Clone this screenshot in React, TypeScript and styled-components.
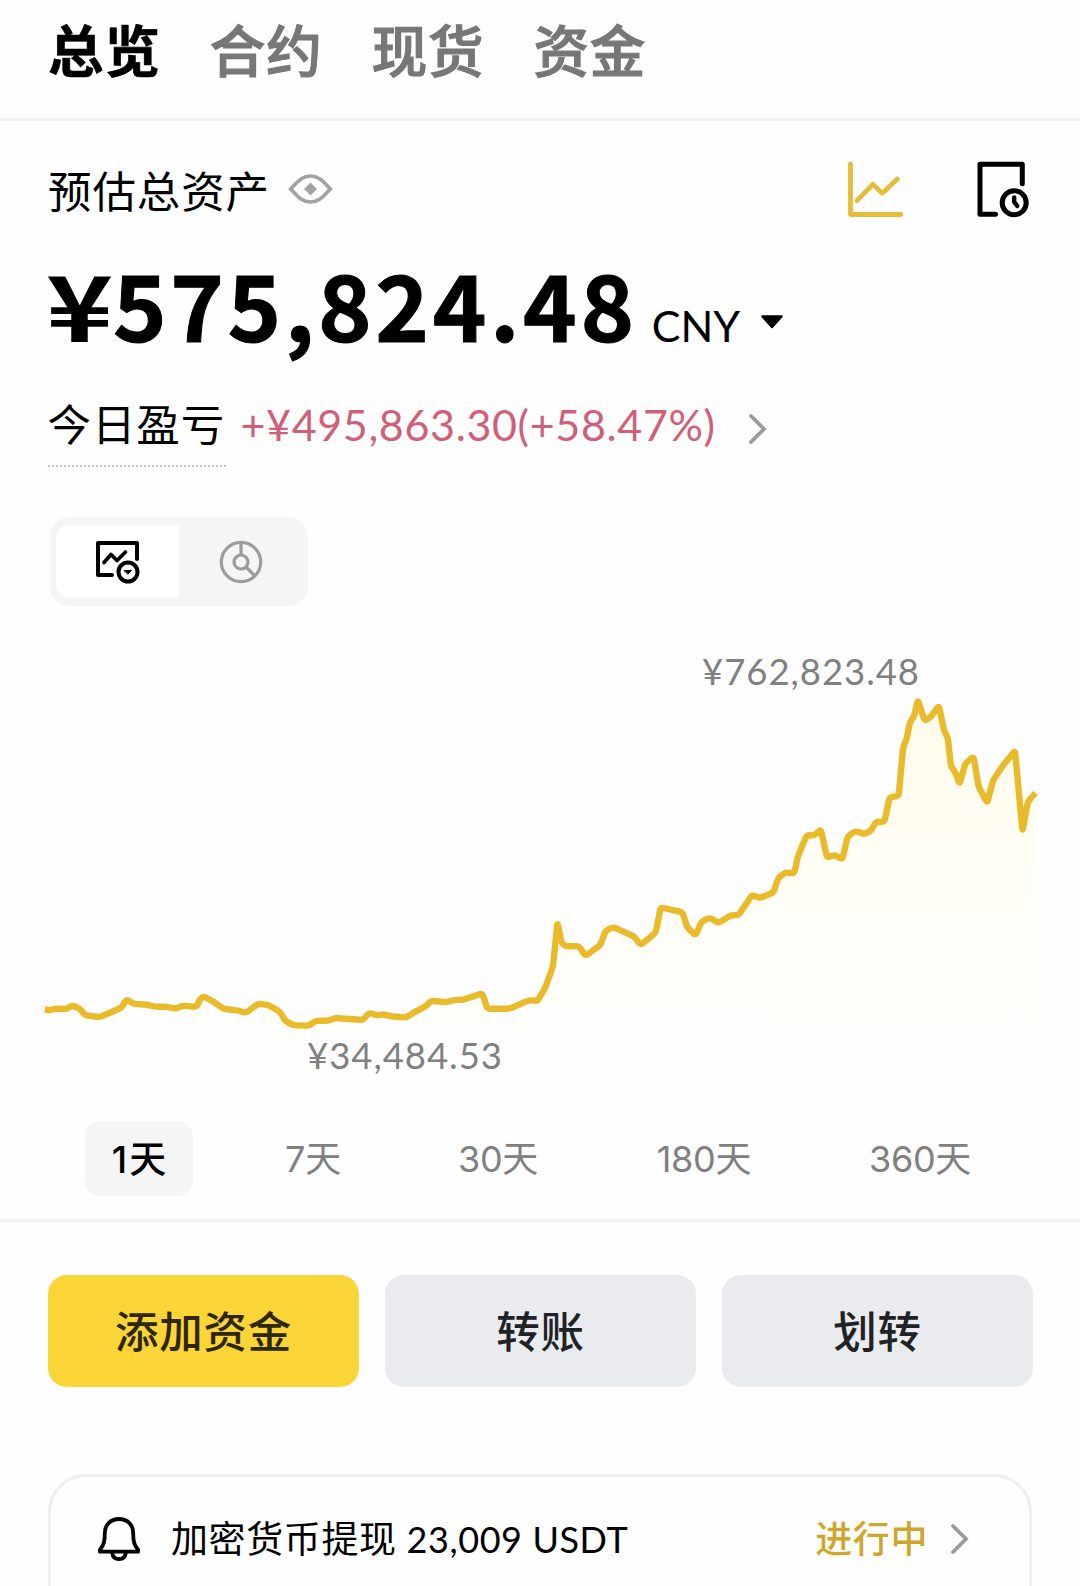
import React from "react";
import styled, { createGlobalStyle } from "styled-components";

const CJK = `"Noto Sans CJK SC", sans-serif`;
const LATIN = `Lato, "Noto Sans CJK SC", sans-serif`;

const GlobalStyle = createGlobalStyle`
  * { box-sizing: border-box; }
  body { margin: 0; background: #fefefe; color: #000; font-family: ${CJK}; }
  button { font-family: inherit; border: 0; padding: 0; background: none; }
`;

const Screen = styled.main`
  width: 1080px;
  height: 1586px;
  overflow: hidden;
  display: flex;
  flex-direction: column;
`;

const TabBar = styled.nav`
  display: flex;
  flex: none;
  gap: 49px;
  height: 121px;
  padding-left: 48px;
  border-bottom: 3px solid #f1f1f1;
`;

const Tab = styled.button<{ $active?: boolean }>`
  height: 96px;
  font-size: 55.5px;
  line-height: 96px;
  letter-spacing: 0.9px;
  font-weight: ${p => (p.$active ? 700 : 500)};
  color: ${p => (p.$active ? "#000" : "#777")};
  -webkit-text-stroke: ${p => (p.$active ? "0.6px #000" : "1.2px #777")};
`;

const Summary = styled.section`
  display: flex;
  flex: none;
  flex-direction: column;
  align-items: flex-start;
  padding: 37px 48px 0;
`;

const TitleRow = styled.div`
  display: flex;
  align-items: center;
  width: 100%;
  height: 62px;
`;

const Title = styled.h1`
  margin: 2px 18px 0 0;
  font-size: 43.5px;
  line-height: 60px;
  font-weight: 400;
  letter-spacing: 0.9px;
`;

const Tools = styled.div`
  display: flex;
  gap: 70px;
  margin: 0 0 0 auto;
`;

const AmountRow = styled.div`
  display: flex;
  align-items: baseline;
  height: 110px;
  margin-top: 27px;
  white-space: nowrap;
`;

const Yen = styled.span`
  width: 67px;
  margin-left: -2px;
  font-size: 91px;
  line-height: 110px;
  font-weight: 700;
  transform: scaleX(1.25);
  transform-origin: left center;
`;

const Amount = styled.span`
  font-size: 91px;
  line-height: 110px;
  font-weight: 700;
  letter-spacing: 3.6px;
  -webkit-text-stroke: 1px #000;
`;

const Currency = styled.span`
  margin: 0 20px 0 14px;
  font: 400 43px/1 ${LATIN};
`;

const TodayRow = styled.div`
  display: flex;
  height: 84px;
  margin: 27px 0 0;
  white-space: nowrap;
`;

const TodayLabel = styled.span`
  height: 83px;
  width: 178px;
  margin-left: -0.500px;
  font-size: 43.5px;
  line-height: 78px;
  letter-spacing: 0.9px;
  border-bottom: 2.5px dotted #c6c6c6;
`;

const Profit = styled.span`
  margin: 0 32px 0 15px;
  font: 400 43px/81px ${LATIN};
  letter-spacing: 0.65px;
  color: #d0607a;
`;

const Segmented = styled.div`
  display: flex;
  width: 258px;
  height: 89px;
  margin: 49px 0 0 2px;
  padding: 8px 6px;
  border-radius: 20px;
  background: #f5f5f5;
`;

const Segment = styled.button<{ $active?: boolean }>`
  display: flex;
  align-items: center;
  justify-content: center;
  flex: 1;
  border-radius: 14px 2px 2px 14px;
  background: ${p => (p.$active ? "#fff" : "transparent")};
`;

const ChartArea = styled.svg`
  display: block;
  flex: none;
  width: 1080px;
  height: 494px;
`;

const ChartLabel = styled.text`
  font: 400 36.5px ${LATIN};
  fill: #808080;
`;

const Ranges = styled.div`
  display: flex;
  flex: none;
  height: 122px;
  padding: 21px 0 0 85px;
  border-bottom: 3px solid #f3f3f3;
`;

const Range = styled.button<{ $active?: boolean; $width: number; $gap: number }>`
  width: ${p => p.$width}px;
  margin-right: ${p => p.$gap}px;
  height: 75px;
  padding-top: 2px;
  border-radius: 15px;
  font: ${p => (p.$active ? "500 37px" : "400 36px")}/73px Inter, ${CJK};
  letter-spacing: ${p => (p.$active ? 2 : -0.3)}px;
  text-indent: ${p => (p.$active ? 2 : 0)}px;
  white-space: nowrap;
  text-align: center;
  color: ${p => (p.$active ? "#000" : "#808080")};
  background: ${p => (p.$active ? "#f5f5f5" : "transparent")};
`;

const Actions = styled.div`
  display: grid;
  flex: none;
  grid-template-columns: repeat(3, 1fr);
  gap: 26px;
  padding: 53px 47px 0 48px;
`;

const Action = styled.button<{ $primary?: boolean }>`
  height: 112px;
  padding-bottom: 2px;
  border-radius: 19px;
  font-size: 43.5px;
  line-height: 106px;
  font-weight: 500;
  letter-spacing: 0.8px;
  color: ${p => (p.$primary ? "#2e2704" : "#202226")};
  background: ${p => (p.$primary ? "#fbd437" : "#eaebee")};
`;

const Notice = styled.section`
  display: flex;
  align-items: center;
  flex: none;
  height: 160px;
  margin: 87px 48px 0;
  padding: 0 59px 31px 47px;
  border: 3px solid #efefef;
  border-radius: 38px;
`;

const NoticeText = styled.span`
  margin: -3px auto 0 31px;
  font-size: 37px;
  line-height: 60px;
  letter-spacing: 0.6px;
  white-space: pre;
`;

const NoticeAmount = styled.span`
  font: 400 36px/1 ${LATIN};
`;

const Status = styled.span`
  margin: -3px 22px 0 0;
  font-size: 37px;
  line-height: 60px;
  font-weight: 500;
  letter-spacing: 0.6px;
  color: #cfa62b;
`;

const EyeIcon = () => (
  <svg width="45" height="32" viewBox="0 0 45 32" fill="none">
    <path d="M2.500 16C7.500 12 12 3 22.500 3S37.500 12 42.500 16C37.500 20 33 29 22.500 29S7.500 20 2.500 16Z" stroke="#a2a2a2" strokeWidth="3.600" strokeLinejoin="round" />
    <path d="M22.500 9.500 29 16l-6.500 6.500L16 16Z" fill="#a2a2a2" />
  </svg>
);

const TrendIcon = () => (
  <svg width="60" height="60" viewBox="846 159 60 60" fill="none" stroke="#e6bd38" strokeWidth="4.800" strokeLinecap="round" strokeLinejoin="round">
    <path d="M850.500 164v50.500H901M857 200.700l15.700-16.400 9.600 9L897.300 179" />
  </svg>
);

const HistoryIcon = () => (
  <svg width="56" height="60" viewBox="976 159 56 60" fill="none" stroke="#000" strokeWidth="5" strokeLinecap="round" strokeLinejoin="round">
    <path d="M995.500 214.300H980v-50h42.300v19.500" />
    <circle cx="1014.200" cy="202.700" r="12" />
    <path d="M1014.200 197.500v4.500l3 4" strokeWidth="4.400" />
  </svg>
);

const ChartSegmentIcon = () => (
  <svg width="48" height="48" viewBox="0 0 48 48" fill="none" stroke="#000" strokeWidth="4" strokeLinecap="round" strokeLinejoin="round">
    <path d="M18 37H4V5h39v16" />
    <path d="m10 24.500 7-8 6 6 8.500-8.500" strokeWidth="3.700" />
    <circle cx="34" cy="34" r="9.500" strokeWidth="4" />
    <path d="M30.500 32.500h7L34 36Z" fill="#000" strokeWidth="1" />
  </svg>
);

const PieSegmentIcon = () => (
  <svg width="44" height="44" viewBox="0 0 44 44" fill="none" stroke="#9c9c9c" strokeWidth="3.200">
    <circle cx="22" cy="22" r="19.700" />
    <circle cx="22" cy="22" r="7" />
    <path d="M22 2.500V15M27 27l9 9" />
  </svg>
);

const Caret = styled.svg`
  width: 24px;
  height: 28px;
`;

const Chevron = styled.svg<{ $top?: number }>`
  width: 20px;
  height: 32px;
  margin-top: ${p => p.$top ?? 0}px;
  fill: none;
  stroke: #9b9b9b;
  stroke-width: 3.8;
  stroke-linecap: round;
`;

const BellIcon = () => (
  <svg width="42" height="46" viewBox="0.500 0.500 43 47" fill="none" stroke="#000" strokeWidth="3.900" strokeLinejoin="round">
    <path d="M22 3.500c-9 0-14.500 6.500-14.500 14 0 9-1 12.500-5 17.500v2h39v-2c-4-5-5-8.500-5-17.500 0-7.500-5.500-14-14.500-14Z" />
    <path d="M15 38c.500 4 3 6.500 7 6.500s6.500-2.500 7-6.500" />
  </svg>
);

type Pair = [number, number];

const morning: Pair[] = [
  [44, 148], [60, 151], [75, 146], [110, 147], [126, 136], [150, 146], [165, 166], [210, 171], [235, 160], [275, 143],
  [285, 124], [293, 119], [308, 131], [350, 134], [375, 140], [410, 140], [440, 146], [455, 137], [500, 141], [510, 117],
  [520, 109], [545, 122], [582, 147], [625, 151], [647, 159], [685, 131], [715, 135], [750, 155], [766, 183], [790, 196],
  [838, 197], [855, 183], [897, 182], [915, 174], [1000, 180], [1012, 163], [1022, 159], [1045, 167], [1060, 162],
  [1080, 169], [1130, 172], [1150, 158], [1190, 137], [1203, 122], [1250, 127], [1270, 120], [1300, 119], [1357, 100],
  [1372, 146], [1440, 146], [1495, 121], [1522, 122],
];

const afternoon: Pair[] = [
  [50, 1081], [72, 1040], [92, 980], [105, 848], [117, 910], [128, 919], [165, 918], [183, 948], [225, 915], [240, 872],
  [262, 861], [320, 890], [338, 915], [380, 878], [394, 802], [455, 817], [468, 862], [492, 886], [508, 845], [532, 833],
  [556, 849], [590, 826], [612, 825], [650, 765], [672, 774], [710, 757], [722, 716], [742, 697], [768, 700], [778, 650],
  [803, 585], [825, 586], [842, 568], [860, 653], [880, 645], [903, 658], [917, 590], [938, 573], [965, 582], [983, 572],
  [997, 545], [1020, 546], [1035, 472], [1060, 468], [1073, 320], [1082, 300], [1092, 245], [1103, 230], [1114, 180],
  [1133, 243], [1152, 228], [1173, 197], [1187, 270], [1198, 295], [1207, 380], [1218, 395], [1231, 432], [1247, 370],
  [1270, 350], [1284, 440], [1308, 489], [1325, 420], [1350, 380], [1386, 332], [1407, 573], [1422, 485], [1443, 459],
];

const points = [
  ...morning.map(([x, y]): Pair => [30 + x / 3, 960 + y / 3]),
  ...afternoon.map(([x, y]): Pair => [520 + x / 2.8, 640 + y / 3]),
];

// Rounds every corner of the polyline by up to `radius` pixels.
const roundedLine = (pts: Pair[], radius: number) => {
  const toward = (from: Pair, to: Pair): Pair => {
    const length = Math.hypot(to[0] - from[0], to[1] - from[1]);
    const t = Math.min(radius, length / 2) / length;
    return [from[0] + (to[0] - from[0]) * t, from[1] + (to[1] - from[1]) * t];
  };
  const fmt = (p: Pair) => `${p[0].toFixed(1)} ${p[1].toFixed(1)}`;
  const corners = pts.slice(1, -1).map((p, i) => `L${fmt(toward(p, pts[i]))} Q${fmt(p)} ${fmt(toward(p, pts[i + 2]))}`);
  return `M${fmt(pts[0])} ${corners.join(" ")} L${fmt(pts[pts.length - 1])}`;
};

const line = roundedLine(points, 3);

const BalanceChart = () => (
  <ChartArea viewBox="0 606 1080 494">
    <defs>
      <linearGradient id="area" x1="0" x2="0" y1="700" y2="1038" gradientUnits="userSpaceOnUse">
        <stop offset="0" stopColor="#fffbea" />
        <stop offset="0.5" stopColor="#fffdf5" />
        <stop offset="1" stopColor="#fefefc" />
      </linearGradient>
    </defs>
    <path d={`${line} V1038 H44.700 Z`} fill="url(#area)" />
    <path d={line} fill="none" stroke="#e9bb2b" strokeWidth="6.400" strokeLinejoin="round" />
    <ChartLabel x="702" y="685" textLength="217">¥762,823.48</ChartLabel>
    <ChartLabel x="307" y="1069" textLength="195">¥34,484.53</ChartLabel>
  </ChartArea>
);

const ranges = [
  { label: "1天", width: 108, gap: 66 },
  { label: "7天", width: 108, gap: 76 },
  { label: "30天", width: 110, gap: 96 },
  { label: "180天", width: 110, gap: 106 },
  { label: "360天", width: 110, gap: 0 },
];

export default function App() {
  return (
    <Screen>
      <GlobalStyle />
      <TabBar>
        {["总览", "合约", "现货", "资金"].map((name, i) => (
          <Tab key={name} $active={i === 0}>{name}</Tab>
        ))}
      </TabBar>
      <Summary>
        <TitleRow>
          <Title>预估总资产</Title>
          <EyeIcon />
          <Tools>
            <TrendIcon />
            <HistoryIcon />
          </Tools>
        </TitleRow>
        <AmountRow>
          <Yen>¥</Yen>
          <Amount>575,824.48</Amount>
          <Currency>CNY</Currency>
          <Caret viewBox="0 0 24 28">
            <path d="M2.500 2.500h19L12 13Z" stroke="#000" strokeWidth="2.500" strokeLinejoin="round" />
          </Caret>
        </AmountRow>
        <TodayRow>
          <TodayLabel>今日盈亏</TodayLabel>
          <Profit>+¥495,863.30(+58.47%)</Profit>
          <Chevron viewBox="0 0 20 32" $top={29}>
            <path d="m3 3 13 13L3 29" />
          </Chevron>
        </TodayRow>
        <Segmented>
          <Segment $active><ChartSegmentIcon /></Segment>
          <Segment><PieSegmentIcon /></Segment>
        </Segmented>
      </Summary>
      <BalanceChart />
      <Ranges>
        {ranges.map((r, i) => (
          <Range key={r.label} $active={i === 0} $width={r.width} $gap={r.gap}>{r.label}</Range>
        ))}
      </Ranges>
      <Actions>
        <Action $primary>添加资金</Action>
        <Action>转账</Action>
        <Action>划转</Action>
      </Actions>
      <Notice>
        <BellIcon />
        <NoticeText>加密货币提现<NoticeAmount> 23,009 USDT</NoticeAmount></NoticeText>
        <Status>进行中</Status>
        <Chevron viewBox="0 0 20 32">
          <path d="m3 3 13 13L3 29" />
        </Chevron>
      </Notice>
    </Screen>
  );
}
